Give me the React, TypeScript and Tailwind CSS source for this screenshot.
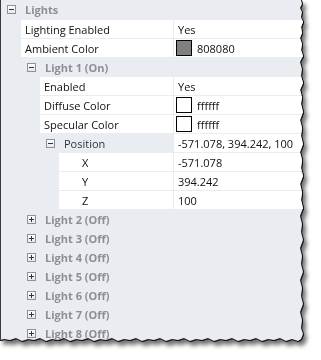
import { ReactNode } from 'react'

type Row =
  | { kind: 'group'; level: number; label: string; open: boolean; bold: boolean; value?: string }
  | { kind: 'prop'; level: number; label: string; value: string; swatch?: string }

const rows: Row[] = [
  { kind: 'prop', level: 1, label: 'Lighting Enabled', value: 'Yes' },
  { kind: 'prop', level: 1, label: 'Ambient Color', value: '808080', swatch: '#808080' },
  { kind: 'group', level: 2, label: 'Light 1 (On)', open: true, bold: true },
  { kind: 'prop', level: 2, label: 'Enabled', value: 'Yes' },
  { kind: 'prop', level: 2, label: 'Diffuse Color', value: 'ffffff', swatch: '#ffffff' },
  { kind: 'prop', level: 2, label: 'Specular Color', value: 'ffffff', swatch: '#ffffff' },
  { kind: 'group', level: 3, label: 'Position', open: true, bold: false, value: '-571.078, 394.242, 100' },
  { kind: 'prop', level: 3, label: 'X', value: '-571.078' },
  { kind: 'prop', level: 3, label: 'Y', value: '394.242' },
  { kind: 'prop', level: 3, label: 'Z', value: '100' },
  { kind: 'group', level: 2, label: 'Light 2 (Off)', open: false, bold: true },
  { kind: 'group', level: 2, label: 'Light 3 (Off)', open: false, bold: true },
  { kind: 'group', level: 2, label: 'Light 4 (Off)', open: false, bold: true },
  { kind: 'group', level: 2, label: 'Light 5 (Off)', open: false, bold: true },
  { kind: 'group', level: 2, label: 'Light 6 (Off)', open: false, bold: true },
  { kind: 'group', level: 2, label: 'Light 7 (Off)', open: false, bold: true },
  { kind: 'group', level: 2, label: 'Light 8 (Off)', open: false, bold: true },
]

// indent of the white name cell / the expander box, per level
const cellIndent: Record<number, string> = { 1: 'pl-[20px]', 2: 'pl-[39px]', 3: 'pl-[58px]' }
const boxIndent: Record<number, string> = { 1: 'pl-[6px]', 2: 'pl-[26px]', 3: 'pl-[45px]' }

function Expander({ open }: { open: boolean }) {
  return (
    <svg width="9" height="9" viewBox="0 0 9 9" className="shrink-0">
      <defs>
        <linearGradient id="exp" x1="0" y1="0" x2="0" y2="1">
          <stop offset="0" stopColor="#ffffff" />
          <stop offset="1" stopColor="#e4e6ea" />
        </linearGradient>
      </defs>
      <rect x="0.5" y="0.5" width="8" height="8" fill="url(#exp)" stroke="#8e9298" />
      <rect x="2" y="4" width="5" height="1" fill="#2b3550" />
      {!open && <rect x="4" y="2" width="1" height="5" fill="#2b3550" />}
    </svg>
  )
}

function ValueCell({ children }: { children: ReactNode }) {
  return <div className="flex flex-1 items-center bg-white pl-[4px] text-[#111]">{children}</div>
}

function PropRow({ row }: { row: Extract<Row, { kind: 'prop' }> }) {
  const leaf = row.level === 3
  return (
    <div className="flex h-[19px] gap-px pb-px">
      <div className={`flex w-[172px] shrink-0 ${cellIndent[row.level]}`}>
        <div className={`flex flex-1 items-center bg-white text-[#111] ${leaf ? 'pl-[23px]' : 'pl-[4px]'}`}>
          {row.label}
        </div>
      </div>
      {row.swatch ? (
        <div className="flex flex-1 items-center bg-white pl-[2px] text-[#111]">
          <span
            className="mr-[5px] h-[16px] w-[16px] shrink-0 border border-black"
            style={{ backgroundColor: row.swatch }}
          />
          {row.value}
        </div>
      ) : (
        <ValueCell>{row.value}</ValueCell>
      )}
    </div>
  )
}

function GroupRow({ row, first }: { row: Extract<Row, { kind: 'group' }>; first?: boolean }) {
  return (
    <div className={`flex gap-px pb-px ${first ? 'h-[20px]' : 'h-[19px]'}`}>
      <div className={`flex w-[172px] shrink-0 items-center gap-[9px] ${boxIndent[row.level]}`}>
        <Expander open={row.open} />
        <span className={row.bold ? 'font-bold text-[#8c8f94]' : 'text-[#2f3340]'}>{row.label}</span>
      </div>
      {row.value && <ValueCell>{row.value}</ValueCell>}
    </div>
  )
}

export default function App() {
  return (
    <div className="h-[360px] w-[321px] bg-white">
      <div className="w-[304px] [filter:drop-shadow(1px_0_0_#151515)_drop-shadow(0_1px_0_#151515)_drop-shadow(3px_4px_2px_rgba(0,0,0,0.55))]">
        <div className="h-[343px] overflow-hidden border-l border-[#3a3a3a] bg-[#e9ecf0] text-[11px] leading-none [font-family:'Open_Sans',sans-serif] [clip-path:polygon(0_0,301px_0,302px_4px,300px_8px,302px_12px,301px_17px,303px_22px,301px_27px,302px_33px,300px_38px,302px_44px,301px_50px,303px_56px,300px_62px,302px_69px,301px_76px,303px_83px,300px_90px,302px_97px,301px_104px,303px_112px,300px_120px,302px_128px,301px_136px,303px_144px,300px_152px,302px_160px,301px_168px,303px_176px,300px_184px,302px_192px,301px_200px,303px_208px,300px_216px,302px_224px,301px_232px,303px_240px,300px_248px,302px_256px,301px_264px,303px_272px,300px_280px,302px_288px,301px_296px,303px_304px,300px_312px,302px_320px,301px_328px,303px_334px,301px_339px,298px_341px,292px_339px,286px_341px,280px_338px,274px_340px,268px_339px,262px_341px,256px_338px,250px_340px,244px_339px,238px_341px,232px_338px,226px_340px,220px_339px,214px_341px,208px_338px,202px_340px,196px_339px,190px_341px,184px_338px,178px_340px,172px_339px,166px_341px,160px_338px,154px_340px,148px_339px,142px_341px,136px_338px,130px_340px,124px_339px,118px_341px,112px_338px,106px_340px,100px_339px,94px_341px,88px_338px,82px_340px,76px_339px,70px_341px,64px_338px,58px_340px,52px_339px,46px_341px,40px_338px,34px_340px,28px_339px,22px_341px,16px_338px,10px_340px,4px_339px,0_340px)]">
          <GroupRow first row={{ kind: 'group', level: 1, label: 'Lights', open: true, bold: true }} />
          {rows.map((r, i) =>
            r.kind === 'group' ? <GroupRow key={i} row={r} /> : <PropRow key={i} row={r} />
          )}
        </div>
      </div>
    </div>
  )
}
